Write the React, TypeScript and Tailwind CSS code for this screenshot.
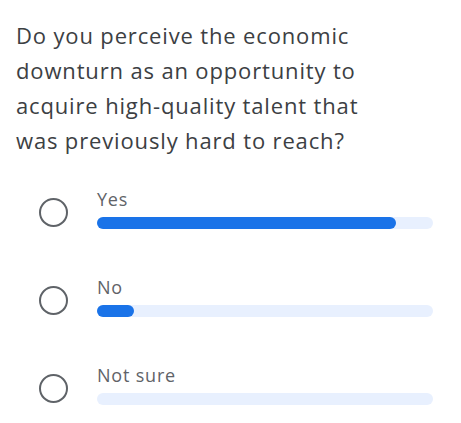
import React from 'react';

const options = [
  { label: 'Yes', pct: 88.9 },
  { label: 'No', pct: 11.1 },
  { label: 'Not sure', pct: 0 },
];

export default function App() {
  return (
    <div className="min-h-[423px] bg-white pl-4 pr-7 pt-[18px]" style={{ fontFamily: '"Open Sans", Roboto, Arial, sans-serif' }}>
      <p className="whitespace-nowrap text-[22px] font-medium leading-[35px] tracking-[0.85px] text-[#3c4043]">
        Do you perceive the economic<br />
        downturn as an opportunity to<br />
        acquire high-quality talent that<br />
        was previously hard to reach?
      </p>
      <div className="mt-[29px] flex flex-col gap-[46px]">
        {options.map((opt) => (
          <div key={opt.label} className="flex items-start">
            <div className="ml-[23px] mt-[11px] h-[29px] w-[29px] shrink-0 rounded-full border-[2.5px] border-[#5f6368]" />
            <div className="ml-[29px] flex-1">
              <div className="text-[18px] leading-[24px] tracking-[0.8px] text-[#5f6368]">{opt.label}</div>
              <div className="mt-[6px] h-[12px] w-full rounded-full bg-[#e8f0fe]">
                {opt.pct > 0 && (
                  <div className="h-full rounded-full bg-[#1a73e8]" style={{ width: `${opt.pct}%` }} />
                )}
              </div>
            </div>
          </div>
        ))}
      </div>
    </div>
  );
}
